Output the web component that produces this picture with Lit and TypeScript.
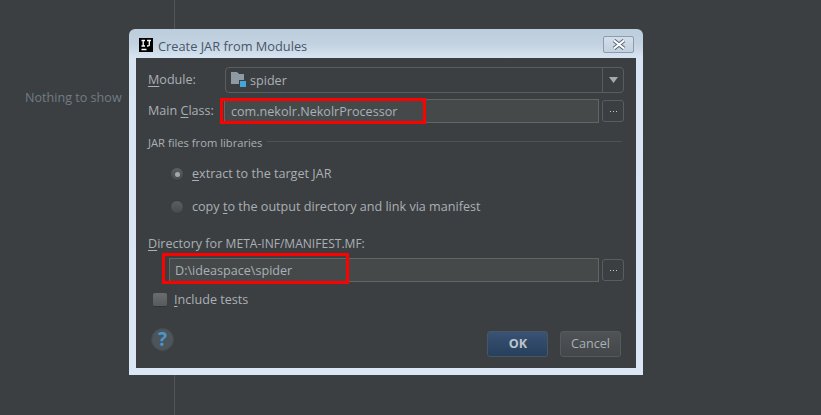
import { LitElement, html, css } from "lit";
import { customElement } from "lit/decorators.js";

@customElement("app-root")
export class AppRoot extends LitElement {
  static styles = css`
    :host { display: block; width: 821px; height: 415px; position: relative; overflow: hidden; background: #3c3f41;
      font-family: "Open Sans", "Noto Sans", sans-serif; font-size: 12.6px; color: #a9b0b6; }
    u { text-decoration-thickness: 1px; text-underline-offset: 2px; }
    .bg { display: flex; height: 100%; }
    .side { width: 175px; height: 100%; border-right: 1px solid #555; padding-top: 89px; box-sizing: border-box; }
    .empty { margin-left: 25px; color: #6f7d85; line-height: 18px; white-space: nowrap; }
    .win { position: absolute; left: 129px; top: 29px; width: 514px; height: 346px; box-sizing: border-box;
      border-radius: 6px 6px 0 0; background: linear-gradient(#bccddd 0, #c3d2e0 15px, #d8e4f1 29px, #dbe7f4 100%);
      padding: 0 7px 7px; display: flex; flex-direction: column; }
    .title { height: 29px; flex: none; display: flex; align-items: center; color: #47566a; padding-left: 3px; padding-top: 2px; box-sizing: border-box; font-size: 12.8px; }
    .title span { position: relative; top: 1px; }
    .ij { width: 14px; height: 14px; background: #000; margin-right: 5px; flex: none; display: block; }
    .x { margin-left: auto; margin-right: 2px; width: 31px; height: 17px; box-sizing: border-box; border: 1px solid #8a9bb2; border-radius: 2px;
      background: linear-gradient(#d3deea, #c3d0de); display: flex; align-items: center; justify-content: center; margin-top: -1px; }
    .body { flex: 1; background: #3c3f41; padding: 9px 12px 11px 12px; color: #a9b0b6; display: flex; flex-direction: column; }
    .row { display: flex; align-items: center; }
    .lbl { white-space: nowrap; line-height: 18px; }
    .caps { font-size: 12.05px; }
    .combo { margin-left: auto; width: 399px; height: 26px; box-sizing: border-box; border: 1px solid #5a5d5f; border-radius: 4px; display: flex; align-items: center; }
    .combo .v { flex: 1; display: flex; align-items: center; padding-left: 5px; gap: 4px; }
    .combo .arrow { width: 20px; height: 100%; border-left: 1px solid #5a5d5f; display: flex; align-items: center; justify-content: center; }
    .tri, .folder { display: block; }
    .inrow { display: flex; align-items: center; gap: 3px; margin-left: auto; }
    .input { height: 24px; box-sizing: border-box; border: 1px solid #646464; background: #45494a; display: flex; align-items: center; padding-left: 6px; position: relative; }
    .tight { padding-left: 5px; }
    .mark { position: absolute; border: 3px solid #fe0000; box-sizing: border-box; pointer-events: none; }
    .m1 { left: -5px; top: -2px; width: 206px; height: 26px; }
    .m2 { left: -8px; top: -6px; width: 187px; height: 31px; }
    .dots { width: 22px; height: 22px; box-sizing: border-box; border: 1px solid #5a5d5f; border-radius: 3px; display: flex; align-items: center; justify-content: center; }
    .sect { display: flex; align-items: center; margin-top: 10px; font-size: 11.2px; }
    .sect span { white-space: nowrap; line-height: 20px; margin-right: 5px; }
    .sect i { display: block; flex: 1; height: 1px; background: #515151; margin-bottom: 4px; margin-right: 2px; }
    .opt { display: flex; align-items: center; margin-left: 22px; gap: 8px; line-height: 18px; white-space: nowrap; }
    .radio { width: 14px; height: 14px; border-radius: 50%; background: linear-gradient(#5b5e60, #484b4d); border: 1px solid #393b3d; box-sizing: border-box; display: flex; align-items: center; justify-content: center; }
    .radio b { display: block; width: 5px; height: 5px; border-radius: 50%; background: #a5a8aa; }
    .check { display: flex; align-items: center; gap: 7px; margin-left: 5px; }
    .box { width: 14px; height: 14px; background: linear-gradient(#6a6d6f, #585b5d); border-radius: 2px; border-bottom: 1px solid #333; box-sizing: border-box; }
    .foot { margin-top: auto; display: flex; align-items: center; padding-left: 3px; }
    .help { width: 23px; height: 23px; border-radius: 50%; background: #4b555b; border: 1px solid #444b50; box-sizing: border-box; display: flex; align-items: center; justify-content: center; color: #4a97c9; font-weight: 700; font-size: 19px; margin-top: -10px; }
    .btn { width: 61px; height: 26px; box-sizing: border-box; border: 1px solid #555a5e; border-radius: 3px; display: flex; align-items: center; justify-content: center; padding-bottom: 1px; }
    .ok { margin-left: auto; background: linear-gradient(#3a5273, #263f5c); border-color: #4a5666; font-weight: 700; color: #bcc4ca; padding-left: 1px; }
    .cancel { margin-left: 12px; margin-right: 3px; background: linear-gradient(#505355, #444749); }
  `;

  private dots() {
    return html`<div class="dots"><svg width="7" height="1" viewBox="0 0 7 1"><path d="M0 0h1v1H0zM3 0h1v1H3zM6 0h1v1H6z" fill="#c8c8c8"/></svg></div>`;
  }

  render() {
    return html`
      <div class="bg"><div class="side"><div class="empty">Nothing to show</div></div></div>
      <div class="win">
        <div class="title">
          <svg class="ij" viewBox="0 0 14 14"><rect width="14" height="14" fill="#000"/><path d="M2.500 2.500h3.500M4.200 2.500v5.500M2.500 8h3.500M8 2.500h4M10.300 2.500v4.500Q10.300 8 8 8M2.500 11.500h5" fill="none" stroke="#fff" stroke-width="1.300"/></svg>
          <span>Create JAR from Modules</span>
          <div class="x"><svg width="14" height="11" viewBox="0 0 14 11"><path d="M2 1.500l10 8M12 1.500l-10 8" stroke="#55647a" stroke-width="4"/><path d="M2 1.500l10 8M12 1.500l-10 8" stroke="#fff" stroke-width="2.200"/></svg></div>
        </div>
        <div class="body">
          <div class="row">
            <span class="lbl"><u>M</u>odule:</span>
            <div class="combo">
              <div class="v">
                <svg class="folder" width="15" height="16" viewBox="0 0 15 16"><path d="M0 0h6l2 2h5v10H0z" fill="#8e9aa3"/><rect x="8" y="8" width="7" height="8" fill="#3c3f41"/><rect x="9" y="9" width="6" height="6" fill="#45a5d6"/></svg>
                spider
              </div>
              <div class="arrow"><svg class="tri" width="9" height="6" viewBox="0 0 9 6"><path d="M0 0h9L4.500 6z" fill="#a9a9a9"/></svg></div>
            </div>
          </div>
          <div class="row" style="margin-top:6px">
            <span class="lbl">Main <u>C</u>lass:</span>
            <div class="inrow">
              <div class="input" style="width:375px">com.nekolr.NekolrProcessor<div class="mark m1"></div></div>
              ${this.dots()}
            </div>
          </div>
          <div class="sect"><span>JAR files from libraries</span><i></i></div>
          <div class="opt" style="margin-top:12px"><div class="radio"><b></b></div><span><u>e</u>xtract to the target JAR</span></div>
          <div class="opt" style="margin-top:15px"><div class="radio"></div><span>copy <u>t</u>o the output directory and link via manifest</span></div>
          <div class="lbl" style="margin-top:19px"><u>D</u>irectory for <span class="caps">META-INF/MANIFEST.MF:</span></div>
          <div class="row" style="margin-top:5px">
            <div class="inrow">
              <div class="input tight" style="width:430px">D:\\ideaspace\\spider<div class="mark m2"></div></div>
              ${this.dots()}
            </div>
          </div>
          <div class="check" style="margin-top:9px"><div class="box"></div><span class="lbl"><u>I</u>nclude tests</span></div>
          <div class="foot">
            <div class="help">?</div>
            <div class="btn ok">OK</div>
            <div class="btn cancel">Cancel</div>
          </div>
        </div>
      </div>`;
  }
}
